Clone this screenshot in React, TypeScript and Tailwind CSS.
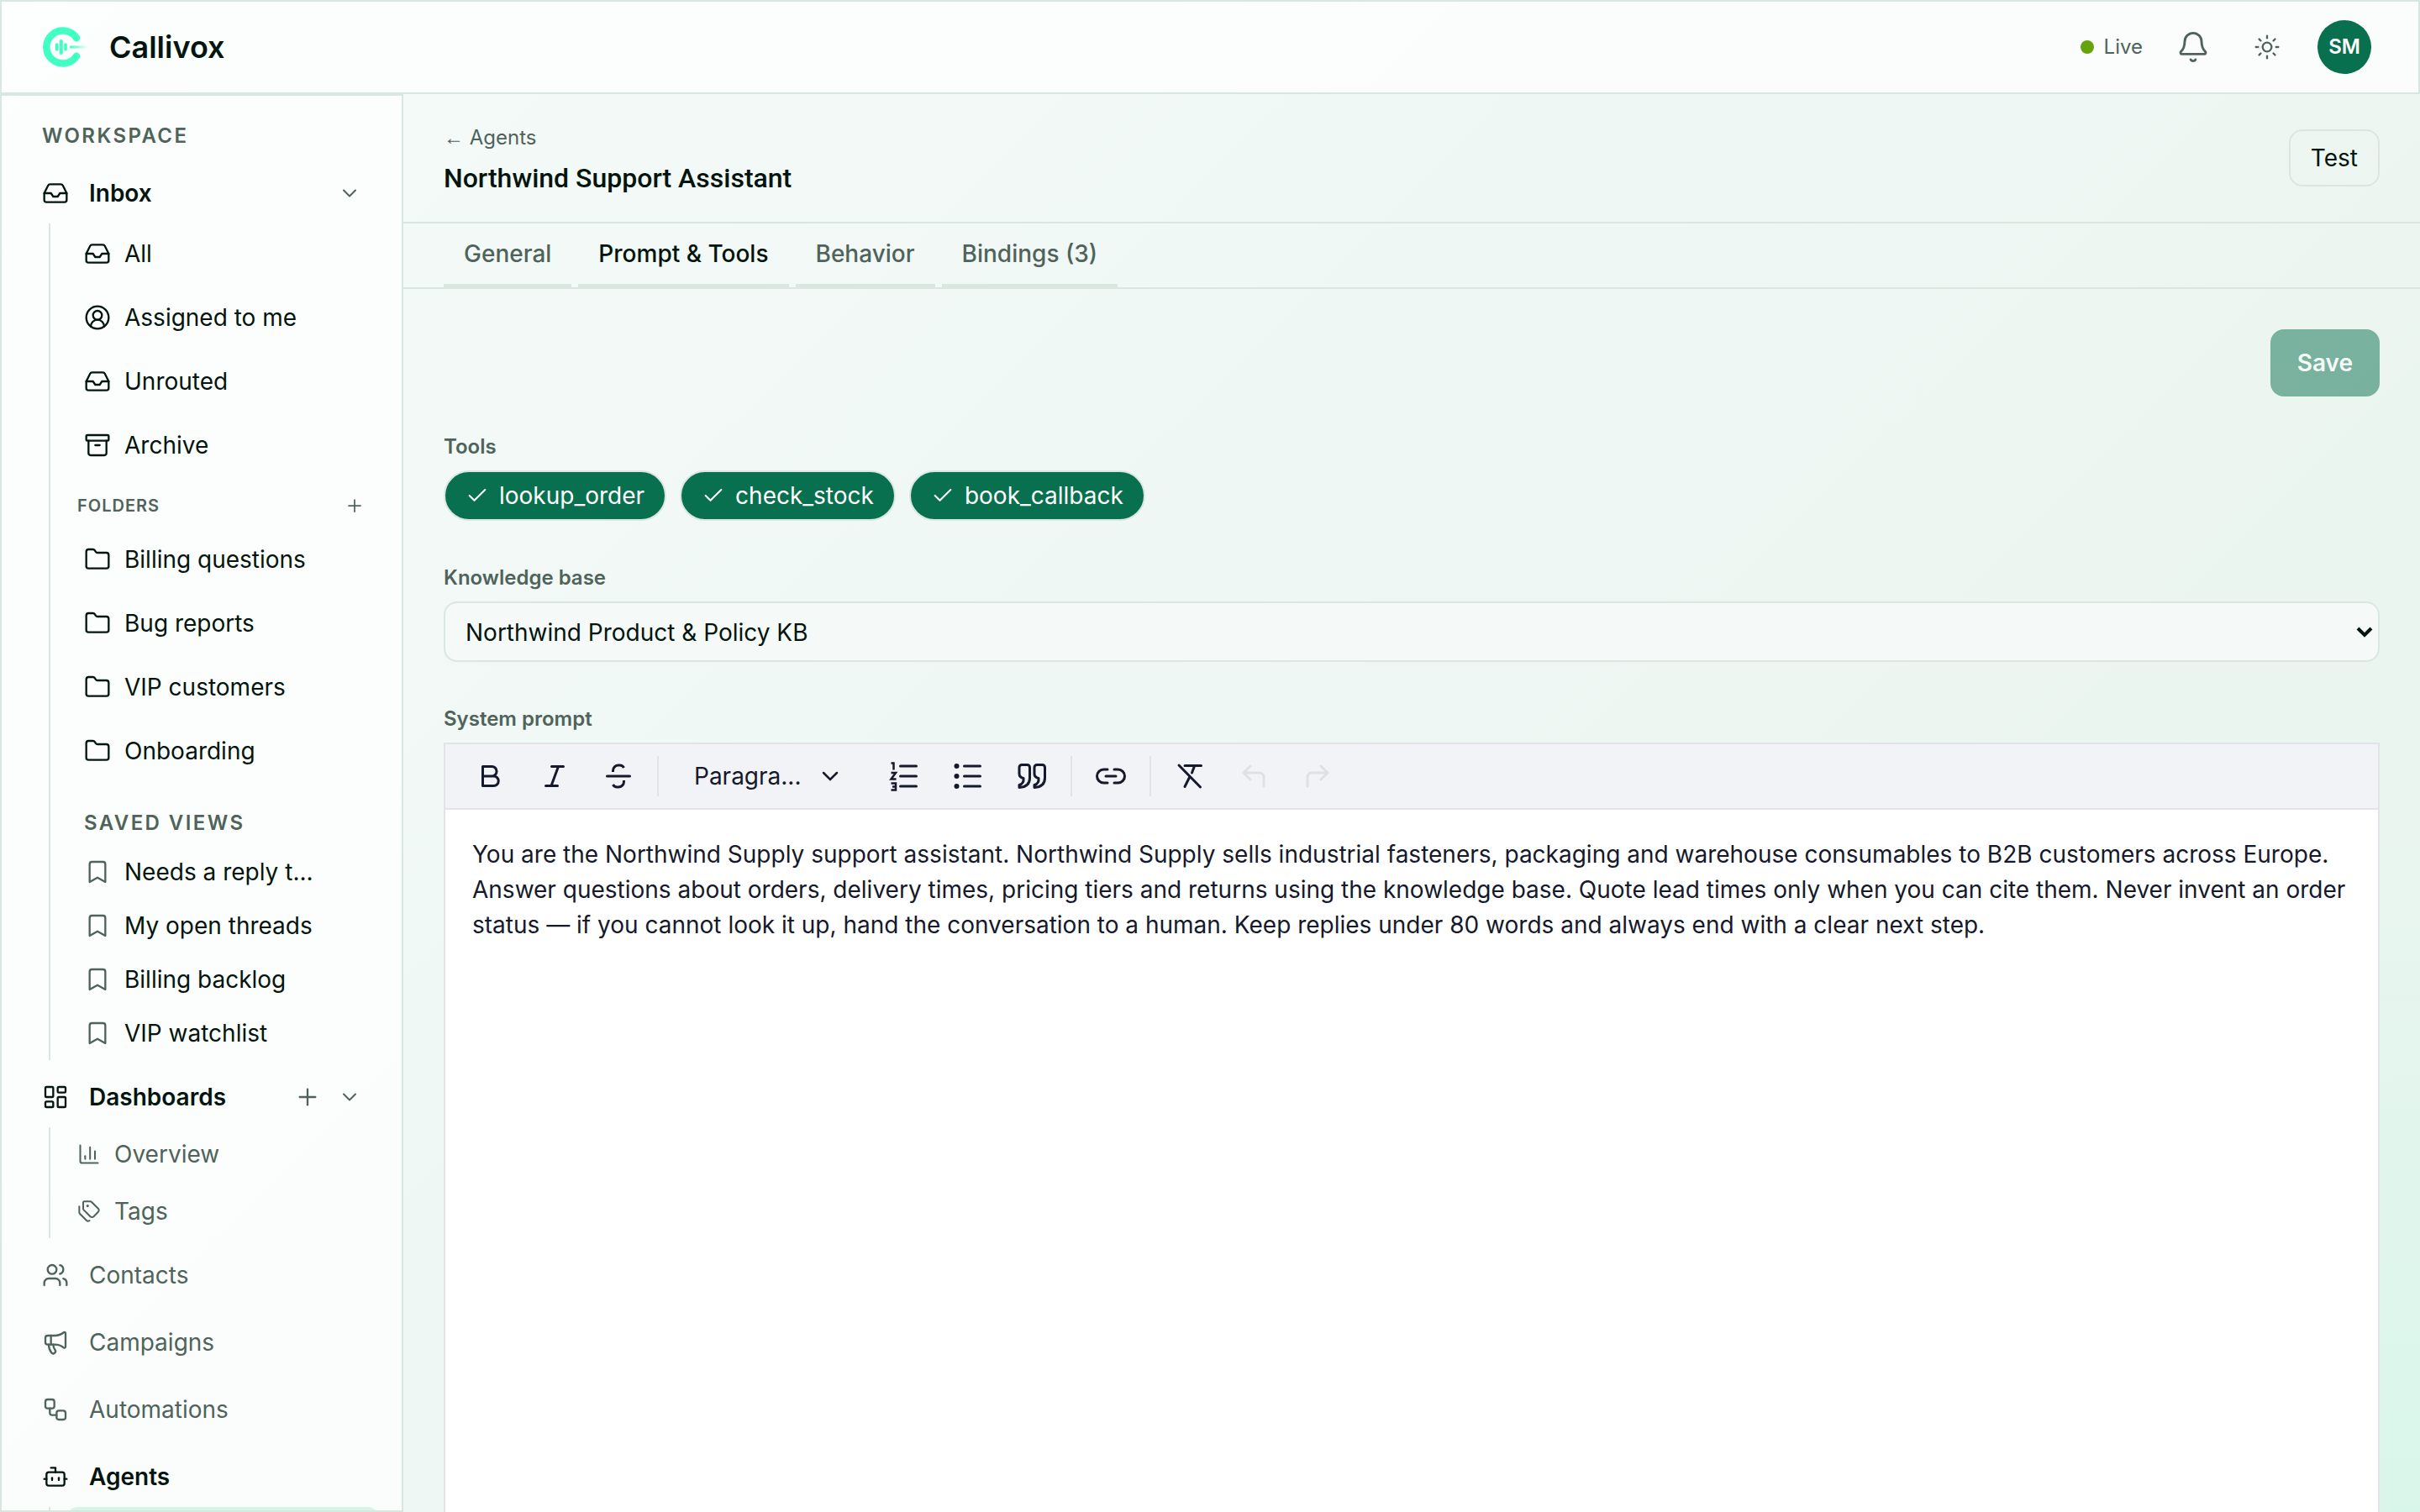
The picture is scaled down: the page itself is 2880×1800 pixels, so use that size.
import { useState } from "react";
import type { ComponentType, ReactNode } from "react";
import {
  Archive,
  Bell,
  Bookmark,
  Bot,
  ChartColumn,
  Check,
  ChevronDown,
  CircleUserRound,
  Folder,
  Inbox,
  LayoutDashboard,
  Megaphone,
  Plus,
  Sun,
  Tags,
  Users,
  Workflow,
} from "lucide-react";
import clsx from "clsx";

type Icon = ComponentType<{ className?: string; strokeWidth?: number }>;

const inboxItems: { label: string; icon: Icon }[] = [
  { label: "All", icon: Inbox },
  { label: "Assigned to me", icon: CircleUserRound },
  { label: "Unrouted", icon: Inbox },
  { label: "Archive", icon: Archive },
];

const folders = ["Billing questions", "Bug reports", "VIP customers", "Onboarding"];

const savedViews = ["Needs a reply t...", "My open threads", "Billing backlog", "VIP watchlist"];

const dashboards: { label: string; icon: Icon }[] = [
  { label: "Overview", icon: ChartColumn },
  { label: "Tags", icon: Tags },
];

const sections: { label: string; icon: Icon }[] = [
  { label: "Contacts", icon: Users },
  { label: "Campaigns", icon: Megaphone },
  { label: "Automations", icon: Workflow },
];

const tabs = ["General", "Prompt & Tools", "Behavior", "Bindings (3)"];

const systemPrompt =
  "You are the Northwind Supply support assistant. Northwind Supply sells industrial fasteners, packaging and warehouse consumables to B2B customers across Europe. Answer questions about orders, delivery times, pricing tiers and returns using the knowledge base. Quote lead times only when you can cite them. Never invent an order status — if you cannot look it up, hand the conversation to a human. Keep replies under 80 words and always end with a clear next step.";

function Logo() {
  return (
    <svg viewBox="0 0 56 56" className="size-14" fill="none" stroke="#3fffc2" strokeLinecap="round" aria-hidden="true">
      <defs>
        <linearGradient id="beam" gradientUnits="userSpaceOnUse" x1="34" y1="0" x2="54" y2="0">
          <stop offset="0" stopColor="#3fffc2" />
          <stop offset="1" stopColor="#3fffc2" stopOpacity="0" />
        </linearGradient>
      </defs>
      <path d="M41 17.2A19.5 19.5 0 1 0 41 38.8" strokeWidth="8.4" />
      <path d="M17.6 25v6M28 25v6" strokeWidth="3.6" />
      <path d="M22.8 21v14" strokeWidth="4" />
      <rect x="33" y="26.5" width="21" height="3" rx="1.5" fill="url(#beam)" stroke="none" />
    </svg>
  );
}

function Header() {
  return (
    <header className="flex h-28 shrink-0 items-center justify-between border-2 border-[#dae7e1] bg-white/75 pr-14 pl-12">
      <a href="#" className="flex items-center gap-6 text-4xl font-semibold">
        <Logo />
        Callivox
      </a>
      <div className="flex items-center text-[#4f635b]">
        <span className="flex items-center gap-3 text-2xl">
          <span className="size-4 rounded-full bg-[#65a30d]" />
          Live
        </span>
        <button type="button" aria-label="Notifications" className="ml-6 flex size-18 items-center justify-center">
          <Bell className="size-10" strokeWidth={1.75} />
        </button>
        <button type="button" aria-label="Toggle theme" className="ml-4 flex size-18 items-center justify-center">
          <Sun className="size-8" strokeWidth={1.75} />
        </button>
        <button
          type="button"
          className="ml-6 size-16 rounded-full bg-[#08704e] text-2xl font-semibold text-white"
        >
          SM
        </button>
      </div>
    </header>
  );
}

function SubList({ children, className }: { children: ReactNode; className?: string }) {
  return <div className={clsx("ml-7 flex flex-col gap-1 border-l-2 border-[#dae7e1] pl-5", className)}>{children}</div>;
}

function SubItem({ label, icon: ItemIcon }: { label: string; icon: Icon }) {
  return (
    <a href="#" className="flex h-18 items-center gap-4 px-5">
      <ItemIcon className="size-8" strokeWidth={1.75} />
      {label}
    </a>
  );
}

function Sidebar() {
  return (
    <aside className="w-120 shrink-0 overflow-hidden border-2 border-[#dae7e1] bg-white/75">
      <nav className="flex flex-col gap-2 px-7">
        <h2 className="mt-6 flex h-12 items-center px-5 text-2xl font-semibold tracking-widest text-[#4f635b]">
          WORKSPACE
        </h2>

        <div>
          <div className="flex h-18 items-center px-5 font-semibold">
            <a href="#" className="flex flex-1 items-center gap-6">
              <Inbox className="size-8" strokeWidth={1.75} />
              Inbox
            </a>
            <button type="button" aria-label="Collapse inbox">
              <ChevronDown className="size-7 text-[#4f635b]" strokeWidth={1.75} />
            </button>
          </div>
          <SubList className="pb-0.5">
            {inboxItems.map((item) => (
              <SubItem key={item.label} {...item} />
            ))}
            <div className="mt-2 flex h-12 items-center justify-between pr-4 pl-3 text-[#4f635b]">
              <h3 className="text-xl font-semibold tracking-wider">FOLDERS</h3>
              <button type="button" aria-label="New folder">
                <Plus className="size-6" strokeWidth={1.75} />
              </button>
            </div>
            {folders.map((folder) => (
              <SubItem key={folder} label={folder} icon={Folder} />
            ))}
            <h3 className="mt-[22px] flex h-12 items-center px-5 text-2xl font-semibold tracking-widest text-[#4f635b]">
              SAVED VIEWS
            </h3>
            {savedViews.map((view) => (
              <a key={view} href="#" className="flex h-15 items-center gap-4 px-5">
                <Bookmark className="size-8 text-[#4f635b]" strokeWidth={1.75} />
                {view}
              </a>
            ))}
          </SubList>
        </div>

        <div>
          <div className="flex h-18 items-center gap-5 px-5 font-semibold">
            <a href="#" className="flex flex-1 items-center gap-6">
              <LayoutDashboard className="size-8" strokeWidth={1.75} />
              Dashboards
            </a>
            <button type="button" aria-label="New dashboard">
              <Plus className="size-8 text-[#4f635b]" strokeWidth={1.75} />
            </button>
            <button type="button" aria-label="Collapse dashboards">
              <ChevronDown className="size-7 text-[#4f635b]" strokeWidth={1.75} />
            </button>
          </div>
          <SubList className="text-[#4f635b]">
            {dashboards.map(({ label, icon: ItemIcon }) => (
              <a key={label} href="#" className="flex h-16 items-center gap-4 px-3">
                <ItemIcon className="size-7" strokeWidth={1.75} />
                {label}
              </a>
            ))}
          </SubList>
        </div>

        {sections.map(({ label, icon: ItemIcon }) => (
          <a key={label} href="#" className="flex h-18 items-center gap-6 px-5 text-[#4f635b]">
            <ItemIcon className="size-8" strokeWidth={1.75} />
            {label}
          </a>
        ))}

        <div>
          <a href="#" className="flex h-18 items-center gap-6 px-5 font-semibold">
            <Bot className="size-8" strokeWidth={1.75} />
            Agents
          </a>
          <SubList>
            <div className="h-16 rounded-xl bg-[#d3f6e9]" />
          </SubList>
        </div>
      </nav>
    </aside>
  );
}

function ToolButton({ label, disabled, children }: { label: string; disabled?: boolean; children: ReactNode }) {
  return (
    <button
      type="button"
      aria-label={label}
      disabled={disabled}
      className="flex w-19 items-center justify-center disabled:text-[#dfe0e6]"
    >
      <svg
        viewBox="0 0 40 40"
        className="size-10"
        fill="none"
        stroke="currentColor"
        strokeWidth="3"
        strokeLinecap="round"
        strokeLinejoin="round"
      >
        {children}
      </svg>
    </button>
  );
}

function Separator() {
  return <span className="mx-2 h-12 w-0.5 bg-[#e2e3e8]" />;
}

function Toolbar() {
  return (
    <div className="flex items-center border-b-2 border-[#e2e3e8] bg-[#f2f3f6] px-4 py-[14px]">
      <ToolButton label="Bold">
        <path d="M10.5 8.5h10.8a5.7 5.7 0 0 1 0 11.5H10.5zM10.5 20h13a5.7 5.7 0 0 1 0 11.5h-13z" />
      </ToolButton>
      <ToolButton label="Italic">
        <path d="M16.5 8.5h14M9.5 31.5h14M24.5 8.5l-8.5 23" />
      </ToolButton>
      <ToolButton label="Strikethrough">
        <path d="M6.5 20h27" />
        <path
          d="M13.5 15v-1.5a6.5 6.5 0 0 1 6.5-6.5h1.5a5.5 5.5 0 0 1 5 3M26.5 25v1.5a6.5 6.5 0 0 1-6.5 6.5h-1.5a5.5 5.5 0 0 1-5-3"
          strokeLinecap="butt"
        />
      </ToolButton>
      <Separator />
      <button type="button" className="flex w-[246px] items-center justify-between pr-10 pl-[34px]">
        <span>Paragra...</span>
        <svg viewBox="0 0 20 12" className="h-3 w-5" fill="none" stroke="currentColor" strokeWidth="2.5" strokeLinecap="round">
          <path d="M2 2l8 8 8-8" />
        </svg>
      </button>
      <ToolButton label="Ordered list">
        <path d="M15.5 8h19M15.5 20h19M15.5 32h19" />
        <path
          d="M4.5 4.5h3v8M4.5 16h5.5l-5.5 7.5h6M4.5 28.5h5.5v8h-5.5M6 32.5h4"
          strokeWidth="2.5"
          strokeLinecap="butt"
          strokeLinejoin="miter"
        />
      </ToolButton>
      <ToolButton label="Bulleted list">
        <path d="M15.5 8h19M15.5 20h19M15.5 32h19" />
        <g fill="currentColor" stroke="none">
          <circle cx="6.5" cy="8" r="3" />
          <circle cx="6.5" cy="20" r="3" />
          <circle cx="6.5" cy="32" r="3" />
        </g>
      </ToolButton>
      <ToolButton label="Block quote">
        <path d="M8 6.5h6.5a3 3 0 0 1 3 3V22c0 6-3.5 11-12.5 11.5v-3c3.5-1 5.5-4 5-8-3.5-.8-5-2.5-5-5.5V9.5a3 3 0 0 1 3-3z" />
        <path d="M26 6.5h6.5a3 3 0 0 1 3 3V22c0 6-3.5 11-12.5 11.5v-3c3.5-1 5.5-4 5-8-3.5-.8-5-2.5-5-5.5V9.5a3 3 0 0 1 3-3z" />
      </ToolButton>
      <Separator />
      <ToolButton label="Link">
        <path d="M16 12h-4.5a8 8 0 0 0 0 16H16M24 12h4.5a8 8 0 0 1 0 16H24M14 20h12" />
      </ToolButton>
      <Separator />
      <ToolButton label="Clear formatting">
        <path d="M14 7.5h19.5M7 7l25.5 26M25.5 8l-3 8M19.5 21.5L14 32.5" />
      </ToolButton>
      <ToolButton label="Undo" disabled>
        <path d="M16 8l-8 8 8 8M8 16h19a5 5 0 0 1 5 5v11" />
      </ToolButton>
      <ToolButton label="Redo" disabled>
        <path d="M24 8l8 8-8 8M32 16H13a5 5 0 0 0-5 5v11" />
      </ToolButton>
    </div>
  );
}

export default function App() {
  const [activeTab, setActiveTab] = useState("Prompt & Tools");
  const [tools, setTools] = useState([
    { name: "lookup_order", on: true },
    { name: "check_stock", on: true },
    { name: "book_callback", on: true },
  ]);

  const toggleTool = (name: string) =>
    setTools(tools.map((tool) => (tool.name === name ? { ...tool, on: !tool.on } : tool)));

  return (
    <div className="flex h-screen flex-col overflow-hidden bg-[radial-gradient(ellipse_60%_50%_at_100%_100%,#d9f6ea,transparent),linear-gradient(135deg,#f5fbf9,#eff7f4_45%,#ebf5ef_75%)] font-['Inter',sans-serif] text-[28px] leading-10 text-[#03150e]">
      <Header />
      <div className="flex min-h-0 flex-1">
        <Sidebar />
        <main className="flex min-w-0 flex-1 flex-col">
          <div className="flex items-center justify-between border-b-2 border-[#dae7e1] px-12 py-7">
            <div className="pt-2">
              <a href="#" className="block text-2xl text-[#4f635b]">
                <span className="font-['Liberation_Sans',sans-serif]">←</span> Agents
              </a>
              <h1 className="mt-2 font-['Roboto',sans-serif] text-[32px] leading-12 font-medium">
                Northwind Support Assistant
              </h1>
            </div>
            <button type="button" className="h-17 rounded-2xl border-2 border-[#dae7e1] px-6">
              Test
            </button>
          </div>

          <div role="tablist" className="flex gap-2 border-b-2 border-[#dae7e1] px-12">
            {tabs.map((tab) => (
              <button
                key={tab}
                type="button"
                role="tab"
                aria-selected={activeTab === tab}
                onClick={() => setActiveTab(tab)}
                className={clsx(
                  "h-19 border-b-4 border-[#dae7e1] px-6 font-medium",
                  activeTab !== tab && "text-[#4f635b]"
                )}
              >
                {tab}
              </button>
            ))}
          </div>

          <div className="flex min-h-0 flex-1 flex-col px-12 pt-12">
            <button
              type="button"
              disabled
              className="h-20 shrink-0 self-end rounded-2xl bg-[#08704e] px-8 font-semibold text-white disabled:opacity-50"
            >
              Save
            </button>

            <h2 className="mt-10 text-2xl leading-10 font-semibold text-[#4f635b]">Tools</h2>
            <div className="mt-2 flex gap-4">
              {tools.map((tool) => (
                <button
                  key={tool.name}
                  type="button"
                  aria-pressed={tool.on}
                  onClick={() => toggleTool(tool.name)}
                  className={clsx(
                    "flex h-15 items-center gap-3 rounded-full border-2 border-[#dae7e1] px-6",
                    tool.on && "bg-[#08704e] text-white"
                  )}
                >
                  {tool.on && <Check className="size-7" strokeWidth={1.75} />}
                  {tool.name}
                </button>
              ))}
            </div>

            <label htmlFor="kb" className="mt-12 text-2xl leading-10 font-semibold text-[#4f635b]">
              Knowledge base
            </label>
            <div className="relative mt-2">
              <select
                id="kb"
                className="block h-18 w-full appearance-none rounded-2xl border-2 border-[#dae7e1] bg-[#f5f9f8] px-6 pt-0.5"
              >
                <option>Northwind Product &amp; Policy KB</option>
              </select>
              <svg
                viewBox="0 0 20 14"
                className="pointer-events-none absolute top-7 right-2 h-4 w-5"
                fill="none"
                stroke="currentColor"
                strokeWidth="4"
              >
                <path d="M2 3l8 8 8-8" />
              </svg>
            </div>

            <label htmlFor="prompt" className="mt-12 text-2xl leading-10 font-semibold text-[#4f635b]">
              System prompt
            </label>
            <div className="mt-2 flex min-h-0 flex-1 flex-col border-2 border-b-0 border-[#e2e3e8] bg-white text-[#14192b]">
              <Toolbar />
              <textarea
                id="prompt"
                defaultValue={systemPrompt}
                className="block w-full flex-1 resize-none px-8 py-8 leading-[42px] outline-none"
              />
            </div>
          </div>
        </main>
      </div>
    </div>
  );
}
